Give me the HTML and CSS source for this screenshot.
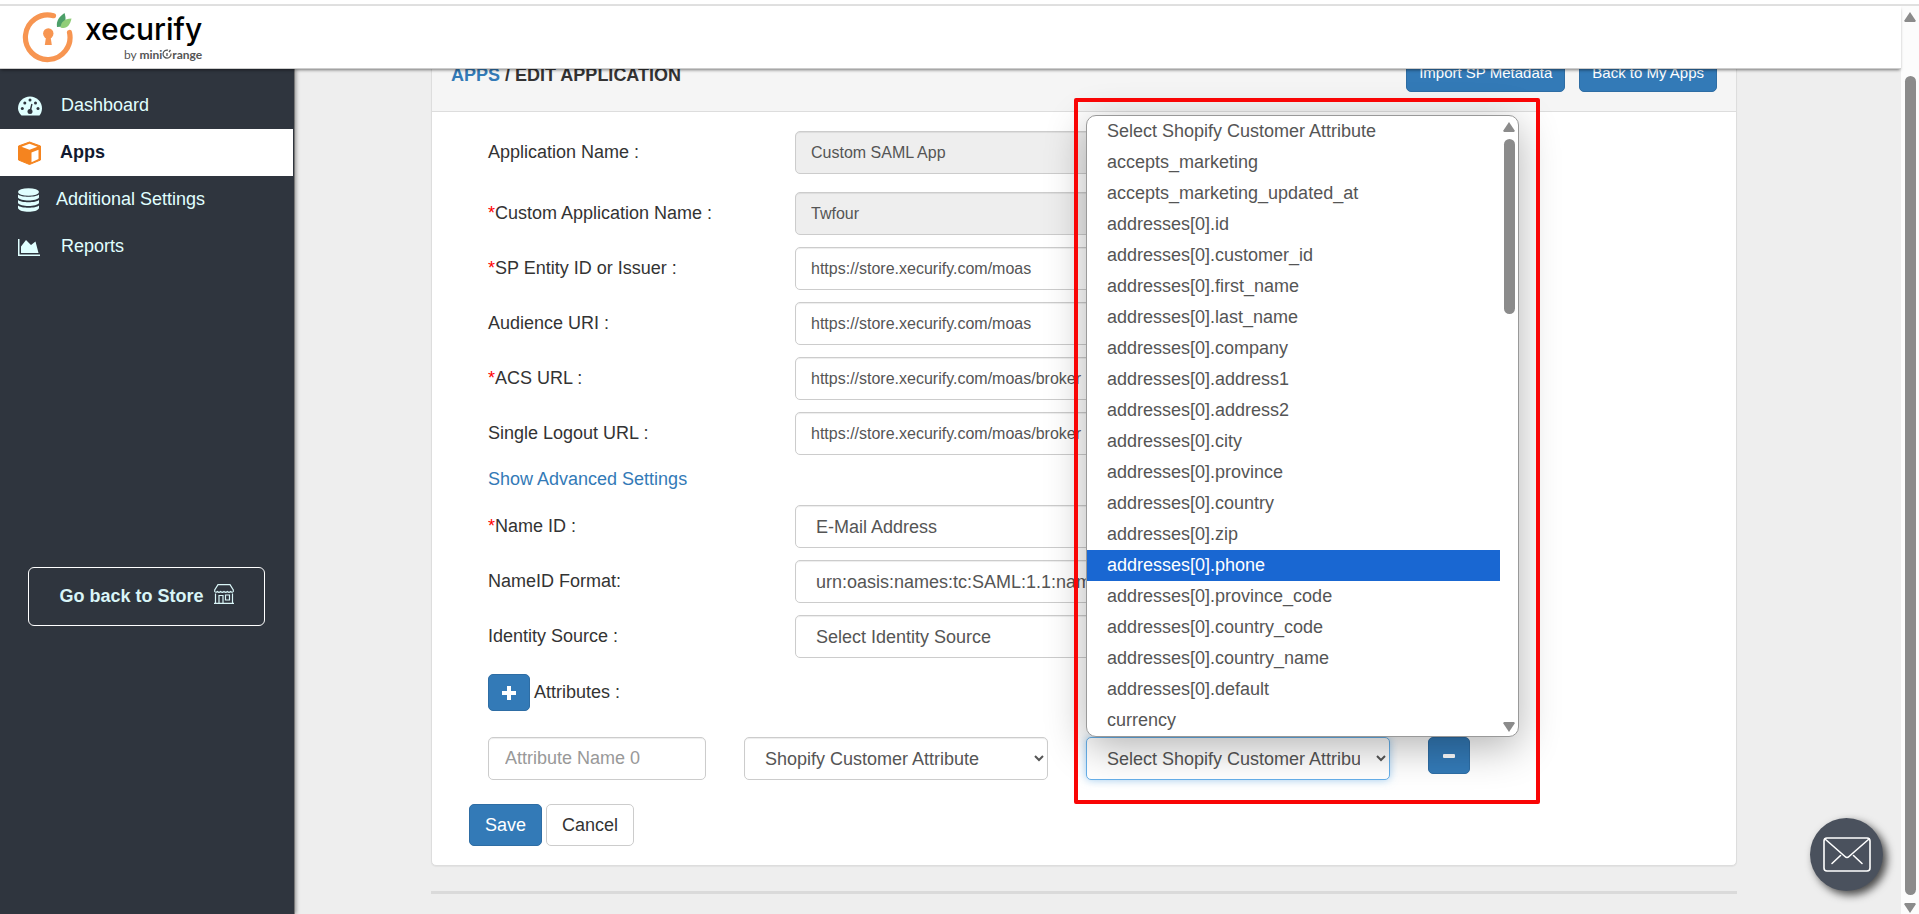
FILE: index.html
```html
<!DOCTYPE html>
<html lang="en">
<head>
    <meta charset="UTF-8">
    <meta name="viewport" content="width=device-width, initial-scale=1.0">
    <title>Xecurify - Edit Application</title>
    <link rel="stylesheet" href="styles.css">
</head>
<body>

<div class="window">
    <div class="page">
        <header class="topbar">
            <a href="#" class="logo">
                <svg class="logo-mark" width="52" height="52" viewBox="0 0 52 52">
                    <path d="M31.5 4.7A22.3 22.3 0 1 0 47.5 21.500" fill="none" stroke="#f79551" stroke-width="5.200" stroke-linecap="round"/>
                    <circle cx="26.300" cy="22.500" r="5.200" fill="#f79551"/>
                    <path d="M24.300 24h4l1.500 10h-7z" fill="#f79551"/>
                    <path d="M35 16C34 10 37 6 42.500 2c1.500 4 1.500 9-1 13.500z" fill="#4c9f68"/>
                    <path d="M38.500 16.500C39 11 42 8 49.500 7.500c-1.500 7-5 11-11 9z" fill="#90cd78"/>
                </svg>
                <span class="logo-text">
                    <span class="logo-name">xecurify</span>
                    <span class="logo-by">by <b>mini</b><svg width="10" height="10" viewBox="0 0 10 10"><path d="M6 1.200A4 4 0 1 0 9 4.500" fill="none" stroke="#555" stroke-width="1.200"/><path d="M7 3l1.500-2M5 4v3" stroke="#555" stroke-width="1.300"/></svg><b>range</b></span>
                </span>
            </a>
        </header>

        <div class="layout">
            <aside class="sidebar">
                <nav>
                    <a href="#" class="nav-item">
                        <svg width="26" height="24" viewBox="0 0 26 24">
                            <path d="M3.500 21.500C1.500 19.500 0 17 0 14.500A12 12 0 0 1 24 14.500c0 2.500-1 5-2.500 7z" fill="currentColor"/>
                            <g fill="#2f353e"><circle cx="4.300" cy="14.500" r="1.500"/><circle cx="6.800" cy="9" r="1.500"/><circle cx="12" cy="6" r="1.500"/><circle cx="17.500" cy="9" r="1.500"/><circle cx="20" cy="14.500" r="1.500"/><circle cx="12" cy="17.500" r="2.500"/></g>
                            <path d="M12.200 17l1.700-7" stroke="#2f353e" stroke-width="1.400"/>
                        </svg>
                        <span>Dashboard</span>
                    </a>
                    <a href="#" class="nav-item active">
                        <svg width="25" height="24" viewBox="0 0 25 24">
                            <path d="M11.500 1L22.500 5v14L11.500 23.500.5 19V5z" fill="#f5841f" stroke="#f5841f" stroke-linejoin="round"/>
                            <path d="M11.500 2.800L19.500 5.800l-8 3-8-3z" fill="#fff"/>
                            <path d="M13.500 11.500l7-2.800v9.300l-7 3.300z" fill="#fff"/>
                        </svg>
                        <span>Apps</span>
                    </a>
                    <a href="#" class="nav-item">
                        <svg width="21" height="24" viewBox="0 0 21 24" fill="currentColor">
                            <ellipse cx="10.500" cy="4" rx="10.500" ry="3.800"/>
                            <path d="M0 6.500c3 3 18 3 21 0v3c-2 4-19 4-21 0zM0 12c3 3 18 3 21 0v3c-2 4-19 4-21 0zM0 17.500c3 3 18 3 21 0v2.800c-2 4.700-19 4.700-21 0z"/>
                        </svg>
                        <span>Additional Settings</span>
                    </a>
                    <a href="#" class="nav-item">
                        <svg width="26" height="24" viewBox="0 0 26 24" fill="currentColor">
                            <path d="M0 4h1.500v15.500H22V21H0z"/>
                            <path d="M3 18v-6.500L8 5l5 5 4.500-3.500L20.500 18z"/>
                        </svg>
                        <span>Reports</span>
                    </a>
                </nav>
                <button type="button" class="store-btn">
                    Go back to Store
                    <svg width="20" height="20" viewBox="0 0 20 20" fill="none" stroke="currentColor" stroke-width="1.200">
                        <path d="M4 .7h12L19.300 6v1.500q-1.200 1.500-2.600 0-1.700 1.500-3.400 0-1.600 1.500-3.300 0-1.700 1.500-3.400 0-1.600 1.500-3.300 0-1.400 1.500-2.600 0V6z"/>
                        <path d="M1.500 9.500v9.500M18.500 9.500v9.500M0 19.300h20M5 19v-7.500h4V19M11.500 11h4v5h-4z"/>
                    </svg>
                </button>
            </aside>

            <main class="content">
                <section class="card">
                    <div class="card-header">
                        <h1><a href="#">APPS</a> / EDIT APPLICATION</h1>
                        <div class="header-actions">
                            <button type="button" class="btn btn-primary btn-sm">Import SP Metadata</button>
                            <button type="button" class="btn btn-primary btn-sm">Back to My Apps</button>
                        </div>
                    </div>

                    <form class="card-body">
                        <div class="form-row row-first">
                            <label for="appName">Application Name :</label>
                            <input type="text" class="field" id="appName" value="Custom SAML App" disabled>
                        </div>
                        <div class="form-row">
                            <label for="customName"><span class="required">*</span>Custom Application Name :</label>
                            <input type="text" class="field" id="customName" value="Twfour" disabled>
                        </div>
                        <div class="form-row">
                            <label for="entityId"><span class="required">*</span>SP Entity ID or Issuer :</label>
                            <input type="text" class="field" id="entityId" value="https://store.xecurify.com/moas">
                        </div>
                        <div class="form-row">
                            <label for="audience">Audience URI :</label>
                            <input type="text" class="field" id="audience" value="https://store.xecurify.com/moas">
                        </div>
                        <div class="form-row">
                            <label for="acsUrl"><span class="required">*</span>ACS URL :</label>
                            <input type="text" class="field" id="acsUrl" value="https://store.xecurify.com/moas/broker">
                        </div>
                        <div class="form-row">
                            <label for="logoutUrl">Single Logout URL :</label>
                            <input type="text" class="field" id="logoutUrl" value="https://store.xecurify.com/moas/broker">
                        </div>

                        <a href="#" class="advanced-link">Show Advanced Settings</a>

                        <div class="form-row">
                            <label for="nameId"><span class="required">*</span>Name ID :</label>
                            <select class="field" id="nameId"><option>E-Mail Address</option></select>
                        </div>
                        <div class="form-row">
                            <label for="nameIdFormat">NameID Format:</label>
                            <select class="field" id="nameIdFormat"><option>urn:oasis:names:tc:SAML:1.1:nameid-format</option></select>
                        </div>
                        <div class="form-row">
                            <label for="identitySource">Identity Source :</label>
                            <select class="field" id="identitySource"><option>Select Identity Source</option></select>
                        </div>

                        <div class="attributes-title">
                            <button type="button" class="btn btn-primary btn-icon" aria-label="Add attribute">
                                <svg width="16" height="16" viewBox="0 0 16 16"><path d="M8 1v14M1 8h14" stroke="#fff" stroke-width="4"/></svg>
                            </button>
                            <span>Attributes :</span>
                        </div>

                        <div class="attribute-row">
                            <input type="text" class="field attr-name" placeholder="Attribute Name 0" aria-label="Attribute name">
                            <select class="field" aria-label="Attribute type"><option>Shopify Customer Attribute</option></select>
                            <div class="dropdown">
                                <select class="field focused" aria-label="Attribute value"><option>Select Shopify Customer Attribute</option></select>
                                <div class="dropdown-menu">
                                    <ul role="listbox">
                                        <li role="option">Select Shopify Customer Attribute</li>
                                        <li role="option">accepts_marketing</li>
                                        <li role="option">accepts_marketing_updated_at</li>
                                        <li role="option">addresses[0].id</li>
                                        <li role="option">addresses[0].customer_id</li>
                                        <li role="option">addresses[0].first_name</li>
                                        <li role="option">addresses[0].last_name</li>
                                        <li role="option">addresses[0].company</li>
                                        <li role="option">addresses[0].address1</li>
                                        <li role="option">addresses[0].address2</li>
                                        <li role="option">addresses[0].city</li>
                                        <li role="option">addresses[0].province</li>
                                        <li role="option">addresses[0].country</li>
                                        <li role="option">addresses[0].zip</li>
                                        <li role="option" class="selected" aria-selected="true">addresses[0].phone</li>
                                        <li role="option">addresses[0].province_code</li>
                                        <li role="option">addresses[0].country_code</li>
                                        <li role="option">addresses[0].country_name</li>
                                        <li role="option">addresses[0].default</li>
                                        <li role="option">currency</li>
                                    </ul>
                                    <div class="scrollbar menu-scrollbar">
                                        <span class="arrow-up"></span>
                                        <span class="thumb"></span>
                                        <span class="arrow-down"></span>
                                    </div>
                                </div>
                                <div class="highlight-box"></div>
                            </div>
                            <button type="button" class="btn btn-primary btn-icon" aria-label="Remove attribute">
                                <svg width="12" height="16" viewBox="0 0 12 16"><rect y="6" width="12" height="4" rx="1" fill="#fff"/></svg>
                            </button>
                        </div>

                        <div class="form-actions">
                            <button type="button" class="btn btn-primary">Save</button>
                            <button type="button" class="btn btn-default">Cancel</button>
                        </div>
                    </form>
                </section>
                <hr>
            </main>
        </div>
    </div>

    <div class="scrollbar page-scrollbar">
        <span class="arrow-up"></span>
        <span class="thumb"></span>
        <span class="arrow-down"></span>
    </div>
</div>

<button type="button" class="contact-btn" aria-label="Contact us">
    <svg width="48" height="35" viewBox="0 0 48 35" fill="none" stroke="#fff" stroke-width="1.600" stroke-linejoin="round" stroke-linecap="round">
        <rect x="1" y="1" width="46" height="33" rx="3"/>
        <path d="M2 2l20 17.500q2 2 4 0L46 2M17.500 18.500L9 26.500M30.500 18.500L39 26.500"/>
    </svg>
</button>

</body>
</html>
```
FILE: styles.css
```css
:root {
    --dark: #2f353e;
    --blue: #337ab7;
    --blue-dark: #2e6da4;
    --border: #ccc;
    --grey: #8b8b8b;
}

* {
    box-sizing: border-box;
}

body {
    margin: 0;
    height: 100vh;
    overflow: hidden;
    display: flex;
    flex-direction: column;
    font-family: "Liberation Sans", Arial, sans-serif;
    font-size: 18px;
    line-height: 24px;
    color: #333;
    background-color: #fff;
}

a {
    color: var(--blue);
    text-decoration: none;
}

/* Page frame */
.window {
    flex: 1;
    min-height: 0;
    display: flex;
    margin-top: 4px;
    border-top: 2px solid #e0e0e0;
}

.page {
    flex: 1;
    display: flex;
    flex-direction: column;
    min-width: 0;
}

.topbar {
    position: relative;
    z-index: 2;
    flex: none;
    height: 63px;
    padding-left: 22px;
    display: flex;
    align-items: center;
    background-color: #fff;
    border-bottom: 1px solid #ccc;
    box-shadow: 0 2px 3px -1px rgba(0, 0, 0, 0.5);
}

.logo {
    display: flex;
    gap: 11px;
    color: #000;
}

.logo-text {
    display: flex;
    flex-direction: column;
}

.logo-name {
    font-family: Inter, sans-serif;
    font-size: 30px;
    font-weight: 500;
    line-height: 36px;
}

.logo-by {
    align-self: flex-end;
    font-family: Lato, sans-serif;
    font-size: 12px;
    line-height: 16px;
    color: #555;
}

.layout {
    flex: 1;
    min-height: 0;
    display: flex;
}

/* Sidebar */
.sidebar {
    position: relative;
    z-index: 1;
    flex: none;
    width: 295px;
    padding-top: 13px;
    background-color: var(--dark);
    border-right: 1px solid #777;
    box-shadow: 1px 0 4px rgba(0, 0, 0, 0.4);
}

.nav-item {
    display: flex;
    align-items: center;
    gap: 17px;
    height: 47px;
    margin-right: 1px;
    padding-left: 18px;
    color: #e0ffff;
}

.nav-item span {
    padding-bottom: 2px;
}

.nav-item.active {
    background-color: #fff;
    color: #121a30;
    font-weight: bold;
}

.store-btn {
    display: flex;
    align-items: center;
    justify-content: center;
    gap: 10px;
    width: 237px;
    height: 59px;
    margin: 297px 0 0 28px;
    padding: 0;
    border: 1px solid #fff;
    border-radius: 6px;
    background: none;
    color: #d9f5f7;
    font-family: inherit;
    font-size: 18px;
    font-weight: bold;
}

.store-btn svg {
    margin-bottom: 6px;
}

/* Main content */
.content {
    flex: 1;
    min-width: 0;
    overflow: hidden;
    padding: 0 164px 0 136px;
    background-color: #eee;
}

.card {
    margin-top: -34px;
    border: 1px solid #ddd;
    border-radius: 5px;
    background-color: #fff;
    box-shadow: 0 1px 1px rgba(0, 0, 0, 0.05);
}

.card-header {
    display: flex;
    align-items: flex-end;
    justify-content: space-between;
    padding: 19px;
    border-bottom: 1px solid #ddd;
    background-color: #f5f5f5;
}

.card-header h1 {
    margin: 0;
    font-size: 18px;
    line-height: 33px;
}

.header-actions {
    display: flex;
    gap: 14px;
}

.card-body {
    padding: 19px 37px;
}

.form-row {
    display: grid;
    grid-template-columns: 307px minmax(0, 610px);
    align-items: center;
    margin: 0 0 12px 19px;
}

.form-row label,
.attributes-title span {
    padding-bottom: 2px;
}

.row-first {
    margin-bottom: 18px;
}

.required {
    color: #f00;
}

.field {
    width: 100%;
    height: 43px;
    padding: 0 15px;
    border: 1px solid var(--border);
    border-radius: 5px;
    background-color: #fff;
    box-shadow: inset 0 1px 1px rgba(0, 0, 0, 0.075);
    color: #555;
    font-family: inherit;
    font-size: 16px;
}

.field:disabled {
    background-color: #eee;
}

.field::placeholder {
    color: #999;
}

select.field,
.attr-name {
    padding: 0 13px 0 16px;
    font-size: 18px;
}

.field.focused {
    border-color: #66afe9;
    box-shadow: 0 0 8px rgba(102, 175, 233, 0.6);
}

.advanced-link {
    display: block;
    width: fit-content;
    margin: 0 0 14px 19px;
}

.attributes-title {
    display: flex;
    align-items: center;
    gap: 4px;
    margin: 16px 0 26px 19px;
}

.attribute-row {
    display: grid;
    grid-template-columns: 218px 304px 304px 42px;
    gap: 38px;
    margin: 0 0 24px 19px;
}

/* Buttons */
.btn {
    height: 42px;
    padding: 0 15px;
    border: 1px solid var(--border);
    border-radius: 5px;
    font-family: inherit;
    font-size: 18px;
}

.btn-primary {
    border-color: var(--blue-dark);
    background-color: var(--blue);
    color: #fff;
}

.btn-default {
    background-color: #fff;
    color: #333;
}

.btn-sm {
    height: 37px;
    padding: 0 12px 2px;
    font-size: 15px;
}

.btn-icon {
    display: flex;
    align-items: center;
    justify-content: center;
    width: 42px;
    height: 37px;
    padding: 0;
}

.form-actions {
    display: flex;
    gap: 4px;
}

/* Open option list */
.dropdown {
    position: relative;
}

.dropdown-menu {
    position: absolute;
    z-index: 1;
    left: 0;
    bottom: 100%;
    display: flex;
    width: 433px;
    border: 1px solid #999;
    border-radius: 10px;
    background-color: #fff;
    box-shadow: 0 10px 40px rgba(0, 0, 0, 0.3);
}

.dropdown-menu ul {
    flex: 1;
    margin: 0;
    padding: 0;
    list-style: none;
}

.dropdown-menu li {
    padding-left: 20px;
    line-height: 31px;
    color: #555;
}

.dropdown-menu li.selected {
    background-color: #1967d2;
    color: #fff;
}

.highlight-box {
    position: absolute;
    z-index: 2;
    top: -639px;
    bottom: -24px;
    left: -12px;
    width: 466px;
    border: 4px solid #f90505;
    border-radius: 2px;
    pointer-events: none;
}

/* Scrollbars */
.scrollbar {
    flex: none;
    display: flex;
    flex-direction: column;
    align-items: center;
    width: 18px;
}

.thumb {
    width: 11px;
    border-radius: 6px;
    background-color: var(--grey);
}

.arrow-up,
.arrow-down {
    width: 12px;
    height: 10px;
    background-color: var(--grey);
    clip-path: polygon(50% 0, 100% 90%, 90% 100%, 10% 100%, 0 90%);
}

.arrow-down {
    margin-top: auto;
    transform: rotate(180deg);
}

.page-scrollbar {
    padding: 6px 0 1px;
    background-color: #fcfcfc;
}

.page-scrollbar .thumb {
    flex: 1;
    margin: 54px 0 8px;
}

.menu-scrollbar {
    padding: 6px 0 4px;
}

.menu-scrollbar .thumb {
    height: 175px;
    margin-top: 7px;
}

hr {
    height: 3px;
    margin: 25px 0 0;
    border: 0;
    background-color: #dadada;
}

/* Floating contact button */
.contact-btn {
    position: fixed;
    z-index: 3;
    right: 36px;
    bottom: 23px;
    display: flex;
    align-items: center;
    justify-content: center;
    width: 73px;
    height: 73px;
    padding: 0;
    border: 0;
    border-radius: 50%;
    background-color: #4a515d;
    box-shadow: 4px 4px 8px rgba(0, 0, 0, 0.7);
}
```
